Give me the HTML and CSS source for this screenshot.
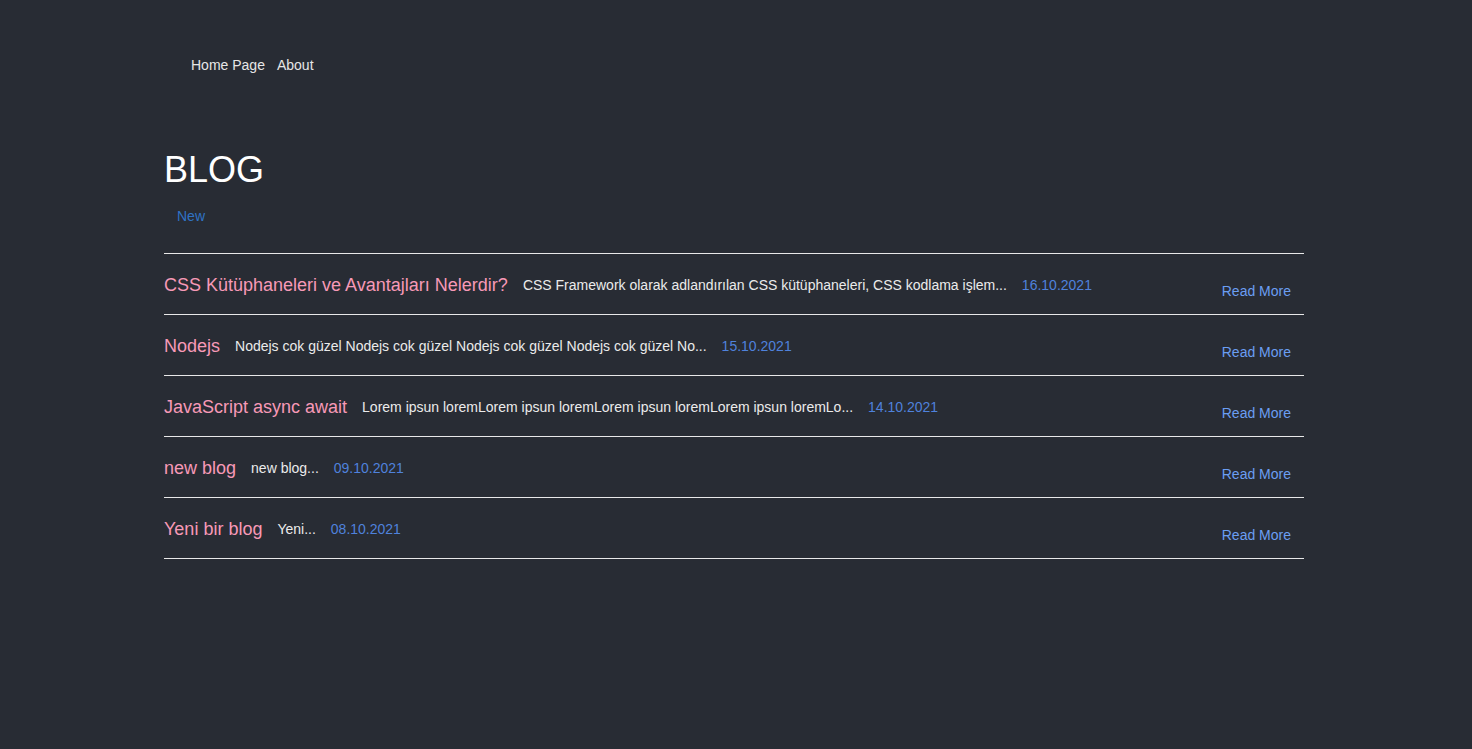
FILE: index.html
```html
<!DOCTYPE html>
<html lang="tr">
<head>
<meta charset="utf-8">
<title>Blog</title>
<link rel="stylesheet" href="styles.css">
</head>
<body>
<div class="page">
  <nav class="nav">
    <a class="nav-link" href="#">Home Page</a>
    <a class="nav-link" href="#">About</a>
  </nav>
  <h1 class="heading">BLOG</h1>
  <a class="new-link" href="#">New</a>
  <ul class="posts">
    <li class="post">
      <div class="post-main">
        <span class="post-title">CSS Kütüphaneleri ve Avantajları Nelerdir?</span>
        <span class="post-excerpt">CSS Framework olarak adlandırılan CSS kütüphaneleri, CSS kodlama işlem...</span>
        <span class="post-date">16.10.2021</span>
      </div>
      <a class="read-more" href="#">Read More</a>
    </li>
    <li class="post">
      <div class="post-main">
        <span class="post-title">Nodejs</span>
        <span class="post-excerpt">Nodejs cok güzel Nodejs cok güzel Nodejs cok güzel Nodejs cok güzel No...</span>
        <span class="post-date">15.10.2021</span>
      </div>
      <a class="read-more" href="#">Read More</a>
    </li>
    <li class="post">
      <div class="post-main">
        <span class="post-title">JavaScript async await</span>
        <span class="post-excerpt">Lorem ipsun loremLorem ipsun loremLorem ipsun loremLorem ipsun loremLo...</span>
        <span class="post-date">14.10.2021</span>
      </div>
      <a class="read-more" href="#">Read More</a>
    </li>
    <li class="post">
      <div class="post-main">
        <span class="post-title">new blog</span>
        <span class="post-excerpt">new blog...</span>
        <span class="post-date">09.10.2021</span>
      </div>
      <a class="read-more" href="#">Read More</a>
    </li>
    <li class="post">
      <div class="post-main">
        <span class="post-title">Yeni bir blog</span>
        <span class="post-excerpt">Yeni...</span>
        <span class="post-date">08.10.2021</span>
      </div>
      <a class="read-more" href="#">Read More</a>
    </li>
  </ul>
</div>
</body>
</html>
```

FILE: styles.css
```css
html, body {
  margin: 0;
  padding: 0;
  background: #282c34;
  min-height: 100%;
}
body {
  font-family: "Liberation Sans", Arial, sans-serif;
  color: #ffffff;
}
.page {
  width: 1140px;
  margin-left: 164px;
  padding-top: 57px;
}
.nav {
  display: flex;
  gap: 12px;
  padding-left: 27px;
  height: 16px;
}
.nav-link {
  font-size: 14px;
  line-height: 16px;
  color: #e6e6e6;
  text-decoration: none;
}
.heading {
  margin: 76px 0 0 0;
  font-size: 36px;
  font-weight: normal;
  line-height: 41px;
  color: #ffffff;
}
.new-link {
  display: block;
  margin: 18px 0 0 13px;
  font-size: 14px;
  line-height: 16px;
  color: #2f73c4;
  text-decoration: none;
}
.posts {
  list-style: none;
  margin: 29px 0 0 0;
  padding: 0;
  border-top: 1px solid #e8e8e8;
}
.post {
  display: flex;
  justify-content: space-between;
  align-items: flex-start;
  height: 60px;
  border-bottom: 1px solid #e8e8e8;
}
.post-main {
  display: flex;
  align-items: center;
  gap: 15px;
  padding-top: 21px;
}
.post-title {
  font-size: 18px;
  line-height: 21px;
  color: #f799b7;
}
.post-excerpt {
  font-size: 14px;
  line-height: 16px;
  color: #ebebeb;
  margin-top: -2px;
}
.post-date {
  font-size: 14px;
  line-height: 16px;
  color: #4f82dc;
  margin-top: -2px;
}
.read-more {
  margin-top: 29px;
  margin-right: 13px;
  font-size: 14px;
  line-height: 16px;
  color: #6b9ef2;
  text-decoration: none;
}
```
